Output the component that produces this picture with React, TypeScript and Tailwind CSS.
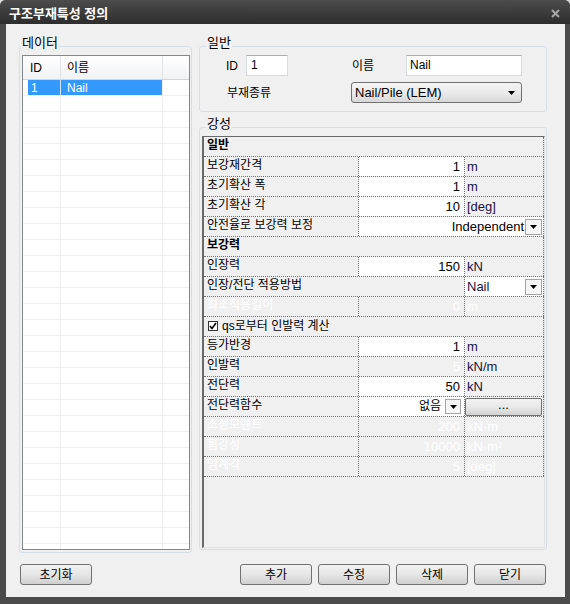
import React from 'react'

const LINE = 'border-dotted border-[#707070]'

function Arrow() {
  return (
    <svg width="7" height="4" viewBox="0 0 7 4">
      <path d="M0 0h7L3.5 4z" fill="#000" />
    </svg>
  )
}

function DropBtn({ className = '' }: { className?: string }) {
  return (
    <div className={`flex shrink-0 items-center justify-center border border-[#a3a3a3] bg-[#f6f6f6] ${className}`}>
      <Arrow />
    </div>
  )
}

function WinButton({ children, className = '' }: { children: React.ReactNode; className?: string }) {
  return (
    <div
      className={`flex h-[21px] w-[72px] items-center justify-center rounded-[3px] border border-[#707070] bg-gradient-to-b from-[#f2f2f2] via-[#e6e6e6] to-[#cfcfcf] ${className}`}
    >
      {children}
    </div>
  )
}

type PropRowProps = { label: string; value?: string; unit?: string; edit?: boolean; off?: boolean }

function PropRow({ label, value, unit, edit, off }: PropRowProps) {
  return (
    <div className={`flex h-[20px] border-b ${LINE}`}>
      <div className={`flex w-[155px] items-center border-r ${LINE} pb-[4px] pl-[3px] ${off ? 'text-white' : ''}`}>
        {label}
      </div>
      <div
        className={`flex w-[106px] items-center justify-end border-r ${LINE} pr-[4px] text-[13px] ${edit ? 'bg-white' : ''} ${off ? 'text-white' : ''}`}
      >
        {value}
      </div>
      <div className={`flex w-[79px] items-center border-r ${LINE} pl-[2px] text-[13px] ${off ? 'text-white' : 'text-[#18123e]'}`}>
        {unit}
      </div>
    </div>
  )
}

function CategoryRow({ label }: { label: string }) {
  return (
    <div className={`flex h-[20px] items-center border-b border-r ${LINE} pb-[4px] pl-[3px] font-bold`}>{label}</div>
  )
}

export default function App() {
  const listRows = Array.from({ length: 29 }, (_, i) => i)

  return (
    <div className="h-[604px] w-[570px] bg-[#d9d9d9] font-['Liberation_Sans','Noto_Sans_CJK_KR',sans-serif] text-[12px] text-black">
      <div className="flex h-full flex-col overflow-hidden rounded-t-[6px] bg-[#4b4b4b]">
        {/* title bar */}
        <div className="flex h-[24px] shrink-0 items-center justify-between bg-gradient-to-b from-[#4c4c4c] to-[#2d2d2d] pl-[9px] pr-[10px] pt-[2px]">
          <span className="text-[13px] font-bold leading-none text-white">구조부재특성 정의</span>
          <svg width="9" height="9" viewBox="0 0 9 9">
            <path d="M1 1L8 8M8 1L1 8" stroke="#a3a3a3" strokeWidth="2.2" />
          </svg>
        </div>

        {/* body */}
        <div className="ml-[6px] flex h-[573px] w-[559px] shrink-0 flex-col bg-[#f0f0f0]">
          <div className="flex items-start pt-[22px]">
            {/* 데이터 */}
            <div className="ml-[13px] flex h-[507px] w-[173px] flex-col rounded-[3px] border border-[#d5dfe5]">
              <span className="-mt-[11px] ml-[1px] w-fit bg-[#f0f0f0] px-[1px] text-[13px] leading-[14px]">데이터</span>
              <div className="ml-[2px] mt-[5px] h-[495px] w-[168px] overflow-hidden border border-[#828790] bg-white">
                <div className="flex h-[24px] border-b border-[#d5d5d5] bg-gradient-to-b from-white to-[#f1f2f4]">
                  <div className="flex w-[38px] items-center border-r border-[#e2e3e5] pl-[7px]">ID</div>
                  <div className="flex w-[102px] items-center border-r border-[#e2e3e5] pl-[6px]">이름</div>
                  <div className="flex-1" />
                </div>
                <div className="flex h-[16px] border-b border-[#efefef]">
                  <div className="w-[5px]" />
                  <div className="flex w-[33px] items-center border-r border-[#cfe6ff] bg-[#3399ff] pl-[3px] text-white">1</div>
                  <div className="flex w-[102px] items-center border-r border-[#efefef] bg-[#3399ff] pl-[6px] text-white">Nail</div>
                  <div className="flex-1" />
                </div>
                {listRows.map((i) => (
                  <div key={i} className="flex h-[16px] border-b border-[#efefef]">
                    <div className="w-[5px]" />
                    <div className="w-[33px] border-r border-[#efefef]" />
                    <div className="w-[102px] border-r border-[#efefef]" />
                    <div className="flex-1" />
                  </div>
                ))}
              </div>
            </div>

            {/* right column */}
            <div className="ml-[7px] flex w-[348px] flex-col">
              {/* 일반 */}
              <div className="flex h-[66px] flex-col rounded-[3px] border border-[#d5dfe5]">
                <span className="-mt-[11px] ml-[6px] w-fit bg-[#f0f0f0] px-[1px] text-[13px] leading-[14px]">일반</span>
                <div className="mt-[5px] flex items-center pl-[26px]">
                  <span className="w-[20px]">ID</span>
                  <div className="h-[21px] w-[42px] border border-[#d6d9de] border-t-[#abadb3] bg-white pl-[4px] pt-[2px] leading-[14px]">1</div>
                  <span className="ml-[64px] w-[54px]">이름</span>
                  <div className="h-[21px] w-[116px] border border-[#d6d9de] border-t-[#abadb3] bg-white pl-[3px] pt-[2px] leading-[14px]">Nail</div>
                </div>
                <div className="mt-[6px] flex items-center pl-[27px]">
                  <span className="w-[124px]">부재종류</span>
                  <div className="flex h-[21px] w-[171px] items-center justify-between rounded-[3px] border border-[#707070] bg-gradient-to-b from-[#f4f4f4] via-[#ebebeb] to-[#d8d8d8] pl-[3px] pr-[6px] text-[13px]">
                    <span>Nail/Pile (LEM)</span>
                    <Arrow />
                  </div>
                </div>
              </div>

              {/* 강성 */}
              <div className="mt-[15px] flex h-[423px] flex-col rounded-[3px] border border-[#d5dfe5]">
                <span className="-mt-[11px] ml-[6px] w-fit bg-[#f0f0f0] px-[1px] text-[13px] leading-[14px]">강성</span>
                <div className="ml-[2px] mt-[5px] h-[412px] w-[343px] border-b border-l-2 border-r border-t border-b-[#e3e3e3] border-l-[#696969] border-r-[#e3e3e3] border-t-[#696969] bg-[#f0f0f0]">
                  <CategoryRow label="일반" />
                  <PropRow label="보강재간격" value="1" unit="m" edit />
                  <PropRow label="초기확산 폭" value="1" unit="m" edit />
                  <PropRow label="초기확산 각" value="10" unit="[deg]" edit />
                  <div className={`flex h-[20px] border-b ${LINE}`}>
                    <div className={`flex w-[155px] items-center border-r ${LINE} pb-[4px] pl-[3px]`}>안전율로 보강력 보정</div>
                    <div className={`flex w-[185px] items-center justify-end border-r ${LINE} bg-white pr-[1px] text-[13px]`}>
                      <span>Independent</span>
                      <DropBtn className="ml-[1px] h-[16px] w-[17px]" />
                    </div>
                  </div>
                  <CategoryRow label="보강력" />
                  <PropRow label="인장력" value="150" unit="kN" edit />
                  <div className={`flex h-[20px] border-b ${LINE}`}>
                    <div className={`flex w-[261px] items-center border-r ${LINE} pb-[4px] pl-[3px]`}>인장/전단 적용방법</div>
                    <div className={`flex w-[79px] items-center justify-between border-r ${LINE} bg-white pl-[2px] pr-[1px] text-[13px] text-[#18123e]`}>
                      <span>Nail</span>
                      <DropBtn className="h-[16px] w-[17px]" />
                    </div>
                  </div>
                  <PropRow label="최소적용길이" value="0" unit="m" off />
                  <div className={`flex h-[20px] items-center border-b border-r ${LINE} pb-[2px] pl-[4px]`}>
                    <div className="flex h-[10px] w-[10px] items-center justify-center border border-[#333] bg-white">
                      <svg width="8" height="8" viewBox="0 0 8 8">
                        <path d="M1 4L3 6.5L7 1" stroke="#000" strokeWidth="1.6" fill="none" />
                      </svg>
                    </div>
                    <span className="ml-[4px]">qs로부터 인발력 계산</span>
                  </div>
                  <PropRow label="등가반경" value="1" unit="m" edit />
                  <div className={`flex h-[20px] border-b ${LINE}`}>
                    <div className={`flex w-[155px] items-center border-r ${LINE} pb-[4px] pl-[3px]`}>인발력</div>
                    <div className={`flex w-[106px] items-center justify-end border-r ${LINE} pr-[4px] text-[13px] text-white`}>5</div>
                    <div className={`flex w-[79px] items-center border-r ${LINE} pl-[2px] text-[13px] text-[#18123e]`}>kN/m</div>
                  </div>
                  <PropRow label="전단력" value="50" unit="kN" edit />
                  <div className={`flex h-[20px] border-b ${LINE}`}>
                    <div className={`flex w-[155px] items-center border-r ${LINE} pb-[4px] pl-[3px]`}>전단력함수</div>
                    <div className={`flex w-[106px] items-center justify-end border-r ${LINE} bg-white pr-[3px]`}>
                      <span className="pb-[2px]">없음</span>
                      <DropBtn className="ml-[4px] h-[15px] w-[16px]" />
                    </div>
                    <div className={`flex w-[79px] items-center border-r ${LINE} pr-[1px]`}>
                      <div className="flex h-[18px] w-full items-center justify-center rounded-[2px] border border-[#707070] bg-gradient-to-b from-[#f2f2f2] via-[#e8e8e8] to-[#d2d2d2] pb-[3px] text-[13px]">
                        ...
                      </div>
                    </div>
                  </div>
                  <PropRow label="소성모멘트" value="200" unit="kN·m" off />
                  <PropRow label="휨강성" value="10000" unit="kN·m²" off />
                  <PropRow label="임계각" value="5" unit="[deg]" off />
                </div>
              </div>
            </div>
          </div>

          {/* buttons */}
          <div className="mt-[11px] flex">
            <WinButton className="ml-[14px]">초기화</WinButton>
            <div className="ml-[148px] flex gap-[6px]">
              <WinButton>추가</WinButton>
              <WinButton>수정</WinButton>
              <WinButton>삭제</WinButton>
              <WinButton>닫기</WinButton>
            </div>
          </div>
        </div>
      </div>
    </div>
  )
}
